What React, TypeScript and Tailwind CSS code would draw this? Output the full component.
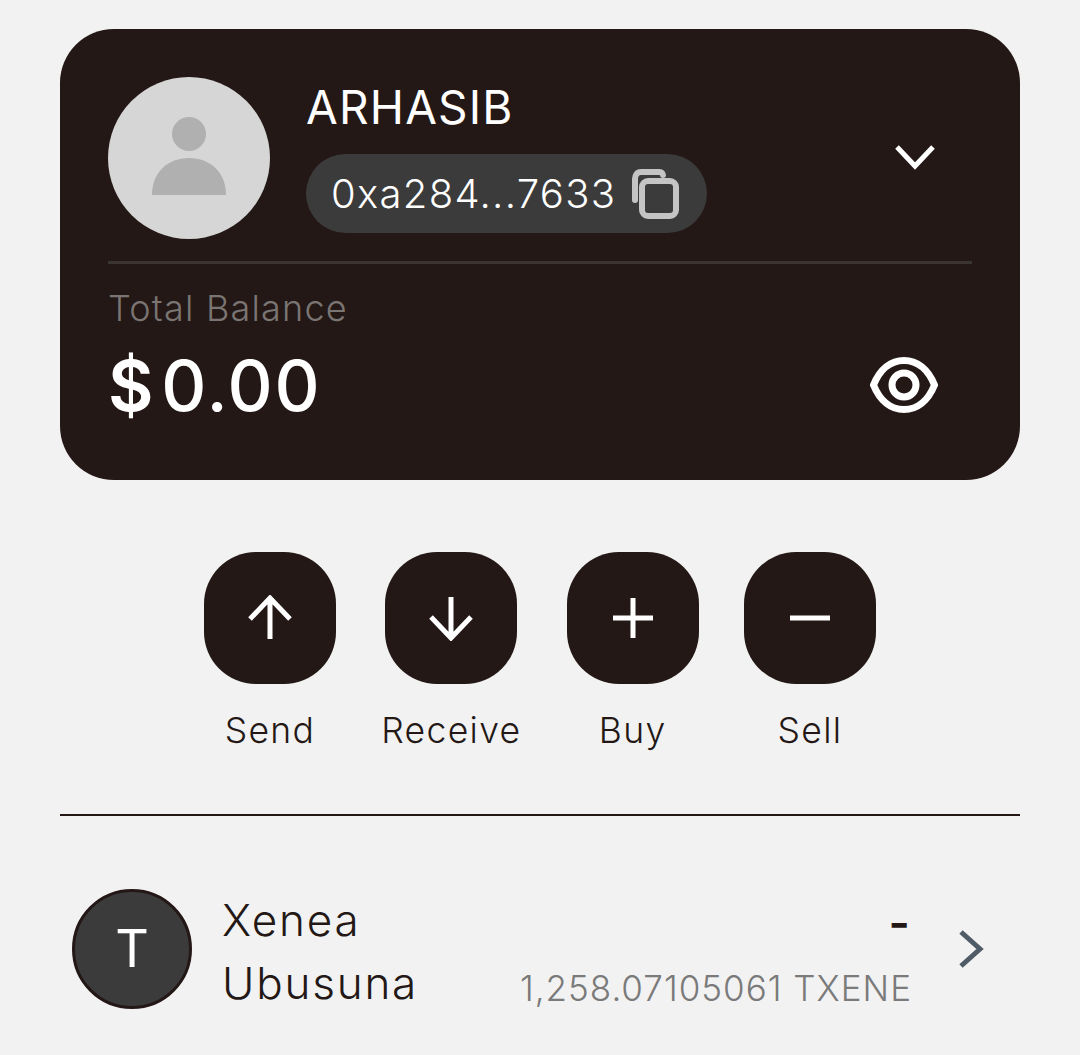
import React from "react";

function Action({ label, children, wide }: { label: string; children: React.ReactNode; wide?: boolean }) {
  return (
    <div className={`flex flex-col items-center ${wide ? "w-[140px]" : "w-[132px]"}`}>
      <div className="flex h-[132px] w-[132px] items-center justify-center rounded-[52px] bg-[#231815]">{children}</div>
      <span className="mt-[24px] text-[35.5px] leading-[46px] font-light tracking-[1.35px] whitespace-nowrap text-[#231815]">{label}</span>
    </div>
  );
}

export default function App() {
  return (
    <div className="h-[1055px] w-[1080px] overflow-hidden bg-[#f2f2f2] px-[60px] pt-[29px] font-['Inter',sans-serif]">
      <section className="h-[451px] rounded-[54px] bg-[#231815] px-[48px] pt-[48px]">
        <div className="flex h-[187px] items-start border-b-[3px] border-[#3a3533]">
          <div className="flex h-[162px] w-[162px] shrink-0 items-center justify-center rounded-full bg-[#d6d6d6]">
            <svg width="74" height="78" viewBox="0 0 74 78" className="-mt-[4px] fill-[#b0b0b0]">
              <ellipse cx="37" cy="17" rx="17" ry="17" />
              <path d="M0 78C0 55 16 41 37 41C58 41 74 55 74 78Z" />
            </svg>
          </div>
          <div className="ml-[36px] flex flex-col items-start">
            <span className="mt-[2px] text-[46px] leading-[56px] font-normal tracking-[1.2px] text-white">ARHASIB</span>
            <div className="mt-[19px] flex h-[79px] w-[401px] items-center rounded-full bg-[#3b3b3b] pl-[25px]">
              <span className="text-[40px] leading-[48px] font-light tracking-[1.3px] text-white">0xa284...7633</span>
              <svg width="50" height="50" viewBox="0 0 50 50" fill="none" className="ml-[14px] stroke-[#c4c4c4]" strokeWidth="6">
                <rect x="12" y="12" width="34" height="35" rx="6" />
                <path d="M5 31V10C5 6 7 3 11 3H29C31 3 33 4 33 6" strokeLinecap="round" />
              </svg>
            </div>
          </div>
          <svg width="42" height="28" viewBox="0 0 42 28" fill="none" className="mt-[67px] mr-[36px] ml-auto stroke-white" strokeWidth="5">
            <path d="M3 3L21 22L39 3" />
          </svg>
        </div>
        <div className="mt-[21px] text-[36px] leading-[46px] font-light tracking-[1.2px] text-[#7a7573]">Total Balance</div>
        <div className="mt-[13px] flex items-center justify-between pr-[34px]">
          <span className="text-[70px] leading-[84px] font-medium tracking-[1.8px] text-white">
            <span className="mr-[6px] font-semibold">$</span>0.00
          </span>
          <svg width="68" height="56" viewBox="0 0 68 56" fill="none" className="-mt-[3px] stroke-white" strokeWidth="7">
            <path d="M3.5 28C10 12 21 3.5 34 3.5C47 3.5 58 12 64.5 28C58 44 47 52.5 34 52.5C21 52.5 10 44 3.5 28Z" />
            <circle cx="34" cy="28" r="12" />
          </svg>
        </div>
      </section>

      <div className="mt-[72px] flex justify-center gap-[45.33px]">
        <Action label="Send">
          <svg width="46" height="46" viewBox="0 0 46 46" fill="none" className="stroke-white" strokeWidth="5">
            <path d="M23 44V3M3 24L23 3L43 24" />
          </svg>
        </Action>
        <Action label="Receive" wide>
          <svg width="46" height="46" viewBox="0 0 46 46" fill="none" className="stroke-white" strokeWidth="5">
            <path d="M23 2V43M3 22L23 43L43 22" />
          </svg>
        </Action>
        <Action label="Buy">
          <svg width="40" height="40" viewBox="0 0 40 40" fill="none" className="stroke-white" strokeWidth="5">
            <path d="M20 0V40M0 20H40" />
          </svg>
        </Action>
        <Action label="Sell">
          <svg width="40" height="6" viewBox="0 0 40 6" fill="none" className="stroke-white" strokeWidth="5">
            <path d="M0 3H40" />
          </svg>
        </Action>
      </div>

      <div className="mt-[60px] h-[2px] bg-[#231815]" />

      <div className="mt-[73px] flex h-[120px] items-center pl-[12px]">
        <div className="flex h-[120px] w-[120px] shrink-0 items-center justify-center rounded-full border-[3px] border-[#231815] bg-[#3b3b3b] text-[52px] font-normal text-white">T</div>
        <div className="ml-[30px] w-[230px] pt-[6px] text-[44px] leading-[63px] font-light tracking-[1.8px] text-[#231815]">
          <div>Xenea</div>
          <div>Ubusuna</div>
        </div>
        <div className="ml-auto flex flex-col items-end pt-[6px]">
          <span className="mr-[2px] text-[46px] leading-[56px] font-semibold text-[#231815]">-</span>
          <span className="mt-[15px] text-[35px] leading-[46px] font-light tracking-[1px] text-[#7a7a7a]">1,258.07105061 TXENE</span>
        </div>
        <svg width="26" height="38" viewBox="0 0 26 38" fill="none" className="mr-[36px] ml-[46px] stroke-[#4f5b66]" strokeWidth="5">
          <path d="M3 2L22 19L3 36" />
        </svg>
      </div>
    </div>
  );
}
